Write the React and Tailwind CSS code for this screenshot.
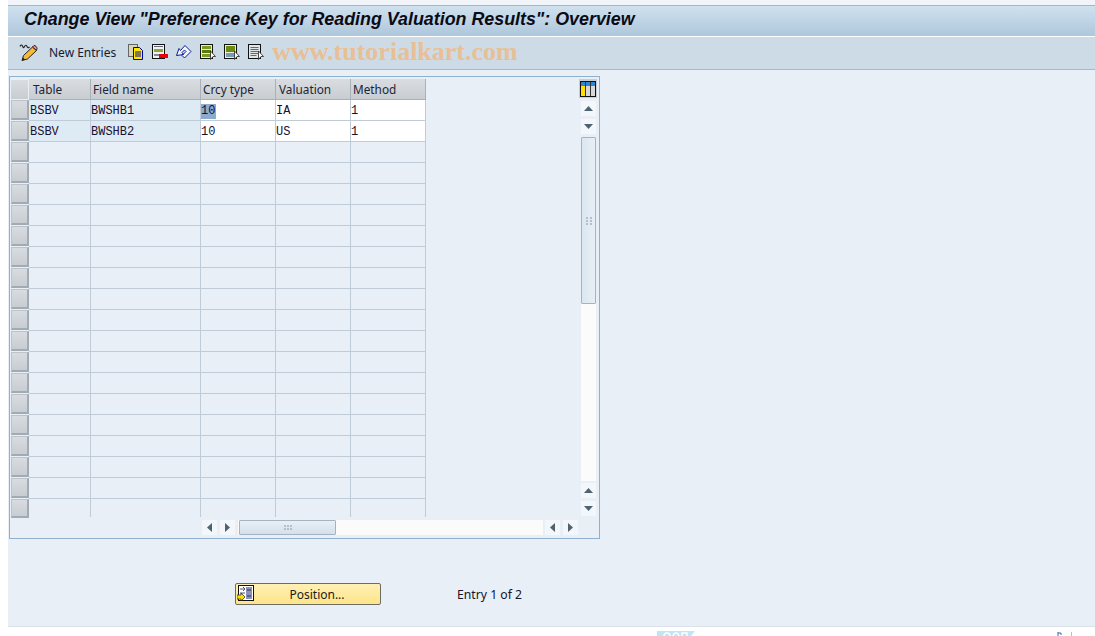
import React from 'react';

const sans = 'font-["Noto_Sans",Tahoma,sans-serif]';

const cols = [
  { label: 'Table', w: 'w-[62px]', pad: 'pl-[4px]', cell: 'pl-px', key: true },
  { label: 'Field name', w: 'w-[110px]', pad: 'pl-[2px]', key: true },
  { label: 'Crcy type', w: 'w-[75px]', pad: 'pl-[2px]' },
  { label: 'Valuation', w: 'w-[75px]', pad: 'pl-[3px]' },
  { label: 'Method', w: 'w-[75px]', pad: 'pl-[2px]' },
];

const rows = [
  ['BSBV', 'BWSHB1', '10', 'IA', '1'],
  ['BSBV', 'BWSHB2', '10', 'US', '1'],
];

const EMPTY_ROWS = 18;

const PencilIcon = () => (
  <svg width="19" height="18" viewBox="0 0 19 18">
    <path d="M1 3.500c.5-2 2-2 2.500-.5s1 2.500 2 .5 2-1.500 2.500 0 1.500 1.500 2.500.5" fill="none" stroke="#222" strokeWidth="1.100" />
    <path d="M13.500 4l4 3.500-9 8.500-5.500 1.500 1.500-5z" fill="#f6b93e" stroke="#222" strokeWidth="1" />
    <path d="M13.500 4l1.500-1.500c1-.5 3 1.500 3 3l-.5 2z" fill="#f08fa0" stroke="#222" strokeWidth="1" />
    <path d="M3 17.500l1-3 2.200 2.200z" fill="#222" />
  </svg>
);

const CopyIcon = () => (
  <svg width="16" height="16" viewBox="0 0 16 16">
    <rect x="0.5" y="0.5" width="9" height="12" fill="#d8d8b0" stroke="#666" />
    <path d="M5.500 3.500h6l3 3v9h-9z" fill="#ffe800" stroke="#0000a8" />
    <path d="M7 8h6M7 10h6M7 12h6" stroke="#0000a8" strokeWidth="1" />
  </svg>
);

const DeleteIcon = () => (
  <svg width="16" height="16" viewBox="0 0 16 16">
    <rect x="0.5" y="0.5" width="12" height="14" fill="#eef2f4" stroke="#111" />
    <rect x="2" y="2" width="9" height="1" fill="#667" />
    <rect x="2" y="5" width="9" height="3" fill="#8aa838" />
    <rect x="2" y="10" width="5" height="2" fill="#889" />
    <rect x="7" y="10" width="9" height="4" fill="#e8000c" />
  </svg>
);

const UndoIcon = () => (
  <svg width="16" height="16" viewBox="0 0 16 16">
    <path
      d="M.5 11.500l2.500-7 1.500 2 4.500-5 6 6-6.500 6.500-2.500-2.500 4-4-1.500-1.500-2.500 2.500 1.500 2z"
      fill="#f2f5fa"
      stroke="#0a1a9a"
      strokeWidth="1"
      strokeLinejoin="round"
    />
  </svg>
);

const ListArrowIcon = ({ dark, grey }) => (
  <svg width="16" height="16" viewBox="0 0 16 16">
    <rect x="0.5" y="0.5" width="12" height="14" fill={grey ? '#dfe6ea' : '#e9efdc'} stroke="#111" />
    {grey ? (
      <path d="M2.500 3.500h8M2.500 5.500h8M2.500 7.500h8M2.500 9.500h8M2.500 11.500h6" stroke="#667" />
    ) : dark ? (
      <>
        <rect x="2" y="2" width="9" height="6" fill="#6a8a10" />
        <rect x="2" y="9" width="9" height="4" fill="#7a9ab0" />
      </>
    ) : (
      <>
        <rect x="2" y="2" width="9" height="3" fill="#7a9a20" />
        <rect x="2" y="6" width="9" height="3" fill="#5a7a10" />
        <rect x="2" y="10" width="9" height="3" fill="#7a9a20" />
      </>
    )}
    <path d="M10.500 7l5 5.500h-2.500l-2.500 3z" fill="#fff" stroke="#222" strokeWidth="0.8" />
  </svg>
);

const LayoutIcon = () => (
  <svg width="16" height="16" viewBox="0 0 16 16">
    <rect x="0.5" y="0.5" width="15" height="15" fill="#fff" stroke="#111" />
    <rect x="1" y="1" width="14" height="4" fill="#2f86d8" />
    <rect x="1" y="5" width="4" height="10" fill="#ffe000" />
    <rect x="6" y="5" width="4" height="10" fill="#d8d8d8" />
    <rect x="11" y="5" width="4" height="10" fill="#d8d8d8" />
    <path d="M5.500 1v14M10.500 1v14" stroke="#333" />
  </svg>
);

const PositionIcon = () => (
  <svg width="17" height="17" viewBox="0 0 17 17">
    <rect x="1.500" y="0.500" width="15" height="15" fill="#fff" stroke="#111" />
    <rect x="9" y="2" width="6" height="12" fill="#8c92c0" />
    <path d="M10 5h4M10 11h4" stroke="#333" />
    <path d="M3 4h5M6 2l2 2-2 2M3 8h5" fill="none" stroke="#556" />
    <path d="M0 10h4V8l4 4-4 4v-2H0z" fill="#ffe000" stroke="#222" strokeWidth="0.7" />
  </svg>
);

const Arrow = ({ dir }) => {
  const pts = { up: '0,5 9,5 4.5,0', down: '0,0 9,0 4.5,5', left: '5,0 5,9 0,4.5', right: '0,0 0,9 5,4.5' }[dir];
  const vertical = dir === 'up' || dir === 'down';
  return (
    <div className="w-[15px] h-[15px] bg-[#f3f6fa] flex items-center justify-center">
      <svg width={vertical ? 9 : 5} height={vertical ? 5 : 9}>
        <polygon points={pts} fill="#4d6272" />
      </svg>
    </div>
  );
};

const Grip = ({ wide }) => (
  <div className={wide ? 'grid grid-cols-3 gap-[1px]' : 'grid grid-cols-2 gap-x-[2px] gap-y-[1px]'}>
    {[0, 1, 2, 3, 4, 5].map((i) => (
      <div key={i} className="w-[2px] h-[2px] bg-[#b3bfca]" />
    ))}
  </div>
);

const SelectorCell = ({ header, last }) => {
  if (header) return <div className="w-[18px] h-[21px] shrink-0 pt-px pr-px"><div className="h-[19px] bg-gradient-to-b from-[#d9dde1] to-[#c8cdd2]" /></div>;
  return (
    <div
      className={`w-[18px] shrink-0 bg-gradient-to-b from-[#d8dce0] to-[#c8cdd2] border border-[#bcc3ca] border-r-2 border-r-[#a2abb4] border-b-2 border-b-[#a2abb4] ${
        last ? 'h-[19px]' : 'h-[20px] mb-px'
      }`}
    />
  );
};

// One grid line of the table, empty when no values are passed
const Row = ({ values, last }) => (
  <div className={`flex ${last ? 'h-[18px]' : 'h-[21px]'}`}>
    <SelectorCell last={last} />
    {cols.map((c, i) => (
      <div
        key={c.label}
        className={`${c.w} ${c.cell || ''} shrink-0 border-r border-[#c0cbd8] ${last ? '' : 'border-b'} pt-[2px] font-["Liberation_Mono",monospace] text-[12px] leading-[19px] text-[#1a1030] ${
          values ? (c.key ? 'bg-[#deebf5]' : 'bg-white') : ''
        }`}
      >
        {values && i === 2 && values[1] === 'BWSHB1' ? (
          <span className="inline-block h-[15px] leading-[15px] mt-[1px] pr-px bg-[#8dabcc]">{values[i]}</span>
        ) : values ? (
          values[i]
        ) : null}
      </div>
    ))}
  </div>
);

export default function App() {
  return (
    <div className={`w-[1095px] h-[636px] overflow-hidden bg-white pl-[8px] ${sans}`}>
      <div className="h-[5px] bg-[#f1f4f9]" />
      <div className="h-[32px] border-t border-[#a8b4c4] border-b border-b-white bg-gradient-to-b from-[#d0e1ef] to-[#aec7dc] pl-[16px] pb-[2px] flex items-center">
        <h1 className='font-["Liberation_Sans",Arial,sans-serif] font-bold italic text-[17.85px] text-[#0b0b14] leading-none whitespace-nowrap'>
          Change View "Preference Key for Reading Valuation Results": Overview
        </h1>
      </div>
      <div className="h-[33px] border-b border-[#a9b8c8] bg-[#cddbe6] flex items-center pl-[11px] pb-px">
        <div className="mb-[2px] flex">
          <PencilIcon />
        </div>
        <span className="ml-[11px] text-[12px] text-[#10203a] whitespace-nowrap">New Entries</span>
        <div className="ml-[12px] mb-[2px] flex items-center gap-[8px]">
          <CopyIcon />
          <DeleteIcon />
          <UndoIcon />
          <ListArrowIcon />
          <ListArrowIcon dark />
          <ListArrowIcon grey />
        </div>
        <span className='ml-[8px] mb-[2px] font-["Liberation_Serif",serif] font-bold text-[26px] leading-none text-[#e8bf96] whitespace-nowrap'>
          www.tutorialkart.com
        </span>
      </div>

      <div className="h-[557px] bg-[#e9eff7] border-b border-[#dde2ea] pt-[6px] pl-px">
        {/* Table control */}
        <div className="w-[591px] h-[463px] border border-[#8fb0cf] pt-[2px] pl-px flex">
          <div className="w-[568px] shrink-0">
            <div className="flex h-[21px] w-[415px]">
              <SelectorCell header />
              {cols.map((c) => (
                <div
                  key={c.label}
                  className={`${c.w} ${c.pad} shrink-0 h-[21px] bg-gradient-to-b from-[#d9dde1] to-[#c8cdd2] border-r border-b border-[#a8b0b8] text-[11.8px] leading-[20px] text-[#1c2436] whitespace-nowrap`}
                >
                  {c.label}
                </div>
              ))}
            </div>
            {rows.map((r) => (
              <Row key={r[1]} values={r} />
            ))}
            {Array.from({ length: EMPTY_ROWS }).map((_, i) => (
              <Row key={i} last={i === EMPTY_ROWS - 1} />
            ))}
            {/* Horizontal scrollbar */}
            <div className="flex items-center mt-[3px] ml-[191px] h-[15px] gap-[3px]">
              <Arrow dir="left" />
              <Arrow dir="right" />
              <div className="w-[305px] h-[15px] bg-[#fbfbfb] flex -mr-px">
                <div className="ml-px w-[97px] h-[15px] bg-gradient-to-b from-[#e8eff6] to-[#d4e0ea] border border-[#a6b2bf] rounded-[1px] flex items-center justify-center">
                  <Grip wide />
                </div>
              </div>
              <Arrow dir="left" />
              <Arrow dir="right" />
            </div>
          </div>

          {/* Vertical scrollbar */}
          <div className="w-[18px] flex flex-col">
            <div className="w-[18px] h-[19px] bg-[#c7ced6] flex items-center justify-center">
              <LayoutIcon />
            </div>
            <div className="mt-[3px] ml-[2px] flex flex-col gap-[3px]">
              <Arrow dir="up" />
              <Arrow dir="down" />
            </div>
            <div className="mt-[3px] ml-[2px] w-[15px] h-[344px] bg-[#fbfbfb]">
              <div className="h-[167px] bg-gradient-to-r from-[#dbe6f0] to-[#e8eff6] border border-[#a6b2bf] rounded-[1px] flex items-center justify-center">
                <Grip />
              </div>
            </div>
            <div className="mt-[2px] ml-[2px] flex flex-col gap-[3px]">
              <Arrow dir="up" />
              <Arrow dir="down" />
            </div>
          </div>
        </div>

        {/* Position button and entry counter */}
        <div className="flex items-center mt-[44px] ml-[226px]">
          <button className="w-[146px] h-[22px] relative border border-[#6d6d5f] rounded-[2px] bg-gradient-to-b from-[#fff0b4] to-[#fee58a] text-[12px] leading-[22px] text-[#1a1a1a] pl-[18px]">
            <span className="absolute left-px top-px">
              <PositionIcon />
            </span>
            Position...
          </button>
          <span className="ml-[76px] mt-[2px] text-[12.2px] text-[#14142a]">Entry 1 of 2</span>
        </div>
      </div>

      {/* Status bar: only the top of it is on the picture */}
      <div className="h-[9px] pt-[4px] pl-[649px] flex items-start">
        <svg width="38" height="5" viewBox="0 0 38 5">
          <polygon points="0,0 38,0 34,5 0,5" fill="#bfe6f6" />
          <path d="M7 5c0-4 6-4 6 0M16 5c1-4 5-4 6 0M25 5V2h5v3" fill="none" stroke="#fff" strokeWidth="1.500" />
        </svg>
        <svg className="ml-[362px] mt-[1px]" width="15" height="4" viewBox="0 0 15 4">
          <path d="M1 0v4M1 1h3v2" fill="none" stroke="#3a6ea8" strokeWidth="1" />
          <path d="M14.500 0v4" stroke="#b8bfc8" strokeWidth="1" />
        </svg>
      </div>
    </div>
  );
}
